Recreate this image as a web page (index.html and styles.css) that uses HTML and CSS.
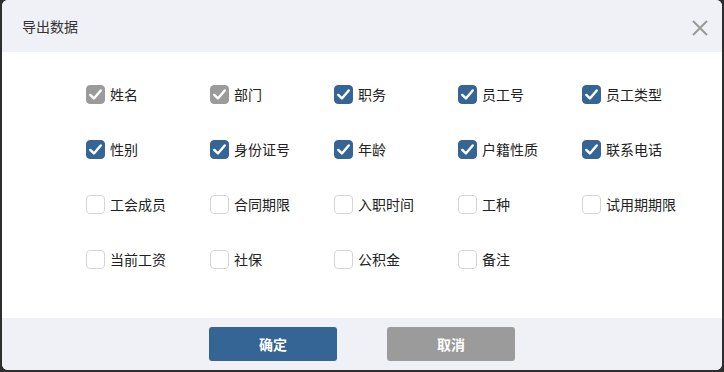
FILE: index.html
```html
<!DOCTYPE html>
<html lang="zh">
<head>
  <meta charset="UTF-8" />
  <title>导出数据</title>
  <link rel="stylesheet" href="styles.css">
</head>
<body>
  <div class="modal">
    <div class="modal-header">
      <span class="title">导出数据</span>
      <svg class="close" width="16" height="16" viewBox="0 0 16 16"><path d="M1 1L15 15M15 1L1 15" stroke="#999" stroke-width="2" fill="none"/></svg>
    </div>
    <div class="modal-body">
      <div class="field-grid">
        <label class="field"><span class="box fixed"><svg viewBox="0 0 20 20"><path d="M4.5 10.5L8.3 14.2L15.5 5.8" stroke="#fff" stroke-width="2.6" fill="none" stroke-linecap="round" stroke-linejoin="round"/></svg></span>姓名</label>
        <label class="field"><span class="box fixed"><svg viewBox="0 0 20 20"><path d="M4.5 10.5L8.3 14.2L15.5 5.8" stroke="#fff" stroke-width="2.6" fill="none" stroke-linecap="round" stroke-linejoin="round"/></svg></span>部门</label>
        <label class="field"><span class="box checked"><svg viewBox="0 0 20 20"><path d="M4.5 10.5L8.3 14.2L15.5 5.8" stroke="#fff" stroke-width="2.6" fill="none" stroke-linecap="round" stroke-linejoin="round"/></svg></span>职务</label>
        <label class="field"><span class="box checked"><svg viewBox="0 0 20 20"><path d="M4.5 10.5L8.3 14.2L15.5 5.8" stroke="#fff" stroke-width="2.6" fill="none" stroke-linecap="round" stroke-linejoin="round"/></svg></span>员工号</label>
        <label class="field"><span class="box checked"><svg viewBox="0 0 20 20"><path d="M4.5 10.5L8.3 14.2L15.5 5.8" stroke="#fff" stroke-width="2.6" fill="none" stroke-linecap="round" stroke-linejoin="round"/></svg></span>员工类型</label>

        <label class="field"><span class="box checked"><svg viewBox="0 0 20 20"><path d="M4.5 10.5L8.3 14.2L15.5 5.8" stroke="#fff" stroke-width="2.6" fill="none" stroke-linecap="round" stroke-linejoin="round"/></svg></span>性别</label>
        <label class="field"><span class="box checked"><svg viewBox="0 0 20 20"><path d="M4.5 10.5L8.3 14.2L15.5 5.8" stroke="#fff" stroke-width="2.6" fill="none" stroke-linecap="round" stroke-linejoin="round"/></svg></span>身份证号</label>
        <label class="field"><span class="box checked"><svg viewBox="0 0 20 20"><path d="M4.5 10.5L8.3 14.2L15.5 5.8" stroke="#fff" stroke-width="2.6" fill="none" stroke-linecap="round" stroke-linejoin="round"/></svg></span>年龄</label>
        <label class="field"><span class="box checked"><svg viewBox="0 0 20 20"><path d="M4.5 10.5L8.3 14.2L15.5 5.8" stroke="#fff" stroke-width="2.6" fill="none" stroke-linecap="round" stroke-linejoin="round"/></svg></span>户籍性质</label>
        <label class="field"><span class="box checked"><svg viewBox="0 0 20 20"><path d="M4.5 10.5L8.3 14.2L15.5 5.8" stroke="#fff" stroke-width="2.6" fill="none" stroke-linecap="round" stroke-linejoin="round"/></svg></span>联系电话</label>

        <label class="field"><span class="box"></span>工会成员</label>
        <label class="field"><span class="box"></span>合同期限</label>
        <label class="field"><span class="box"></span>入职时间</label>
        <label class="field"><span class="box"></span>工种</label>
        <label class="field"><span class="box"></span>试用期期限</label>

        <label class="field"><span class="box"></span>当前工资</label>
        <label class="field"><span class="box"></span>社保</label>
        <label class="field"><span class="box"></span>公积金</label>
        <label class="field"><span class="box"></span>备注</label>
      </div>
    </div>
    <div class="modal-footer">
      <button class="btn primary">确定</button>
      <button class="btn cancel">取消</button>
    </div>
  </div>
</body>
</html>
```

FILE: styles.css
```css
body {
  margin: 0;
  background-color: #2e2e2e;
  font-family: "Noto Sans CJK SC", "Noto Sans", sans-serif;
  color: #333;
}
.modal {
  width: 720px;
  height: 370px;
  margin-left: 2px;
  background-color: #fff;
  border-radius: 6px;
  overflow: hidden;
  display: flex;
  flex-direction: column;
}
.modal-header {
  height: 52px;
  background-color: #f0f1f6;
  display: flex;
  align-items: center;
  justify-content: space-between;
  padding: 0 14px 0 20px;
}
.title {
  font-size: 14px;
  color: #333;
}
.close {
  display: block;
  margin-top: 4px;
}
.modal-body {
  flex: 1;
  padding: 32px 0 0 84px;
}
.field-grid {
  display: grid;
  grid-template-columns: repeat(5, 124px);
  row-gap: 35px;
}
.field {
  display: flex;
  align-items: center;
  height: 20px;
  font-size: 14px;
  color: #222;
  white-space: nowrap;
}
.box {
  width: 17px;
  height: 17px;
  border: 1px solid #d6d6d6;
  border-radius: 4px;
  margin-right: 5px;
  flex-shrink: 0;
  display: block;
}
.box svg {
  display: block;
  width: 19px;
  height: 19px;
  margin: -1px;
}
.box.checked {
  background-color: #356594;
  border-color: #356594;
}
.box.fixed {
  background-color: #9b9b9b;
  border-color: #9b9b9b;
}
.modal-footer {
  height: 52px;
  background-color: #f0f1f6;
  display: flex;
  justify-content: center;
  gap: 50px;
  padding-top: 9px;
  box-sizing: border-box;
}
.btn {
  width: 128px;
  height: 34px;
  border: none;
  border-radius: 3px;
  color: #fff;
  font-family: inherit;
  font-size: 14px;
  font-weight: bold;
}
.btn.primary {
  background-color: #356594;
}
.btn.cancel {
  background-color: #9b9b9b;
}
```
